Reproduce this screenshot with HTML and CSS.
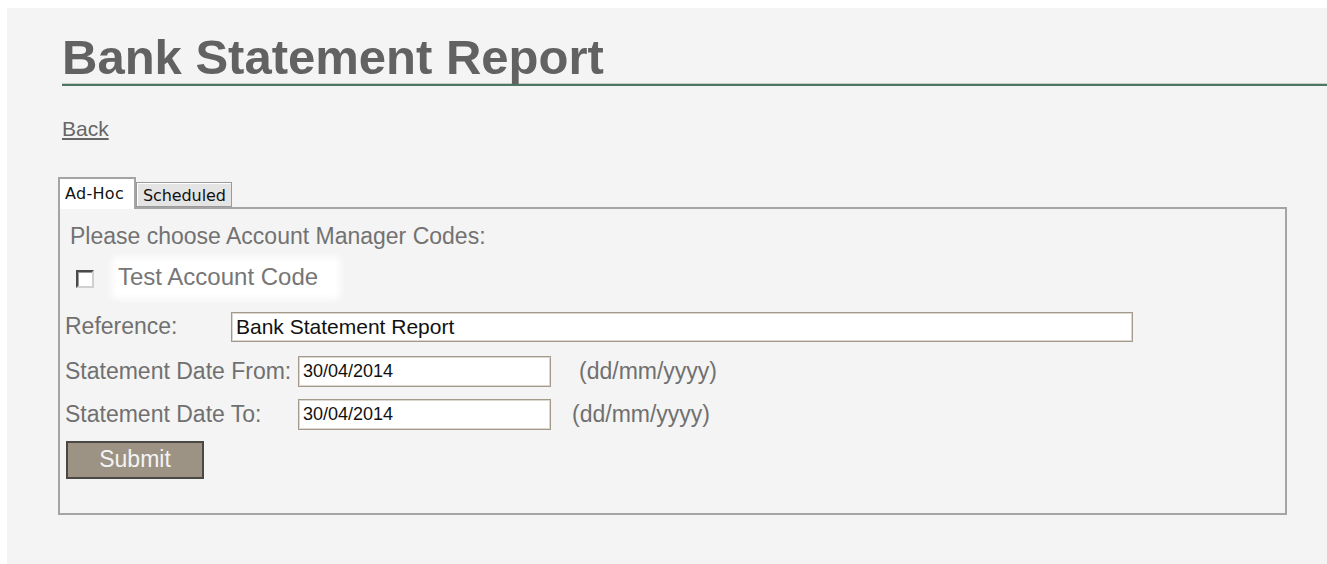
FILE: index.html
```html
<!DOCTYPE html>
<html lang="en">
<head>
<meta charset="utf-8">
<title>Bank Statement Report</title>
<link rel="stylesheet" href="styles.css">
</head>
<body>
<div class="page">
  <h1 class="title">Bank Statement Report</h1>
  <a class="back" href="#">Back</a>

  <div class="tabs">
    <span class="tab tab-active">Ad-Hoc</span>
    <span class="tab">Scheduled</span>
  </div>

  <form class="panel">
    <div class="intro">Please choose Account Manager Codes:</div>

    <label class="code-row">
      <span class="checkbox"></span>
      <span class="code-name">Test Account Code</span>
    </label>

    <div class="row row-ref">
      <span class="label label-ref">Reference:</span>
      <input class="field field-wide" type="text" value="Bank Statement Report">
    </div>

    <div class="row row-from">
      <span class="label label-date">Statement Date From:</span>
      <input class="field field-date" type="text" value="30/04/2014">
      <span class="hint hint-from">(dd/mm/yyyy)</span>
    </div>

    <div class="row row-to">
      <span class="label label-date">Statement Date To:</span>
      <input class="field field-date" type="text" value="30/04/2014">
      <span class="hint hint-to">(dd/mm/yyyy)</span>
    </div>

    <button class="submit" type="button">Submit</button>
  </form>
</div>
</body>
</html>
```

FILE: styles.css
```css
html, body {
  margin: 0;
  padding: 0;
  background: #ffffff;
}

body {
  font-family: "Liberation Sans", Arial, sans-serif;
  color: #707070;
}

.page {
  margin: 8px 0 0 7px;
  min-height: calc(100vh - 8px);
  background: #f4f4f4;
  padding: 25px 0 0 51px;
  box-sizing: border-box;
  display: flex;
  flex-direction: column;
  align-items: flex-start;
}

/* heading with the green rule running to the window edge */
.title {
  align-self: stretch;
  margin: 0 0 0 4px;
  font-size: 49px;
  line-height: 49px;
  font-weight: bold;
  color: #626262;
  padding-bottom: 2px;
  border-bottom: 2px solid #4f7664;
  box-shadow: inset 0 -1px 0 #c8cfcb;
}

.back {
  margin: 32px 0 0 4px;
  font-size: 21px;
  line-height: 22px;
  color: #666666;
  text-decoration: underline;
}

/* tab strip */
.tabs {
  margin-top: 37px;
  display: flex;
  align-items: flex-end;
  position: relative;
  z-index: 1;
}

.tab {
  font-family: "DejaVu Sans", Verdana, sans-serif;
  font-size: 16px;
  color: #111111;
  box-sizing: border-box;
  white-space: nowrap;
}

.tab-active {
  width: 78px;
  height: 32px;
  padding: 5px 0 0 5px;
  letter-spacing: 0.3px;
  background: #ffffff;
  border: 2px solid #a4a4a4;
  border-bottom: none;
  margin-bottom: -2px;
}

.tab:not(.tab-active) {
  width: 96px;
  height: 25px;
  padding: 3px 0 0 6px;
  letter-spacing: -0.1px;
  background: #e4e4e4;
  border: 1px solid #9a9a9a;
  box-shadow: inset 1px 1px 0 #ffffff;
}

/* form panel */
.panel {
  width: 1229px;
  height: 308px;
  box-sizing: border-box;
  border: 2px solid #a4a4a4;
  padding: 14px 0 0 6px;
  display: flex;
  flex-direction: column;
  align-items: flex-start;
  font-size: 23px;
}

.intro {
  margin-left: 4px;
  line-height: 26px;
  color: #727272;
}

.code-row {
  margin: 14px 0 0 10px;
  height: 30px;
  display: flex;
  align-items: center;
}

.checkbox {
  width: 18px;
  height: 18px;
  box-sizing: border-box;
  background: #ffffff;
  border-top: 2px solid #4a4a4a;
  border-left: 2px solid #4a4a4a;
  border-right: 2px solid #d0d0d0;
  border-bottom: 2px solid #d0d0d0;
  box-shadow: inset 1px 1px 0 #9a9a9a;
  margin-top: 2px;
}

.code-name {
  margin-left: 24px;
  font-size: 24px;
  color: #767676;
  background: #ffffff;
  box-shadow: 0 0 7px 6px #ffffff;
  padding: 0 16px 2px 0;
}

.row {
  display: flex;
  align-items: center;
  margin-left: -1px;
  height: 31px;
}

.row-ref { margin-top: 18px; }
.row-from { margin-top: 14px; }
.row-to { margin-top: 12px; }

.label {
  flex-shrink: 0;
  white-space: nowrap;
  color: #707070;
}

.label-ref { width: 166px; }
.label-date { width: 233px; }

.field {
  box-sizing: border-box;
  height: 31px;
  padding: 0 4px;
  font-family: "Liberation Sans", Arial, sans-serif;
  font-size: 18px;
  color: #111111;
  background: #ffffff;
  border: 1px solid #a39a8c;
  box-shadow: inset 0 0 0 1px #dcd7cf;
  outline: none;
}

.field-wide { width: 902px; height: 30px; font-size: 21px; }
.field-date { width: 253px; }

.hint { color: #707070; }
.hint-from { margin-left: 28px; }
.hint-to { margin-left: 21px; }

.submit {
  margin-top: 11px;
  width: 138px;
  height: 38px;
  box-sizing: border-box;
  background: #9d9384;
  border: 2px solid #4a4845;
  color: #f4f4f4;
  font-family: "Liberation Sans", Arial, sans-serif;
  font-size: 23px;
  padding: 0 0 2px;
}
```
